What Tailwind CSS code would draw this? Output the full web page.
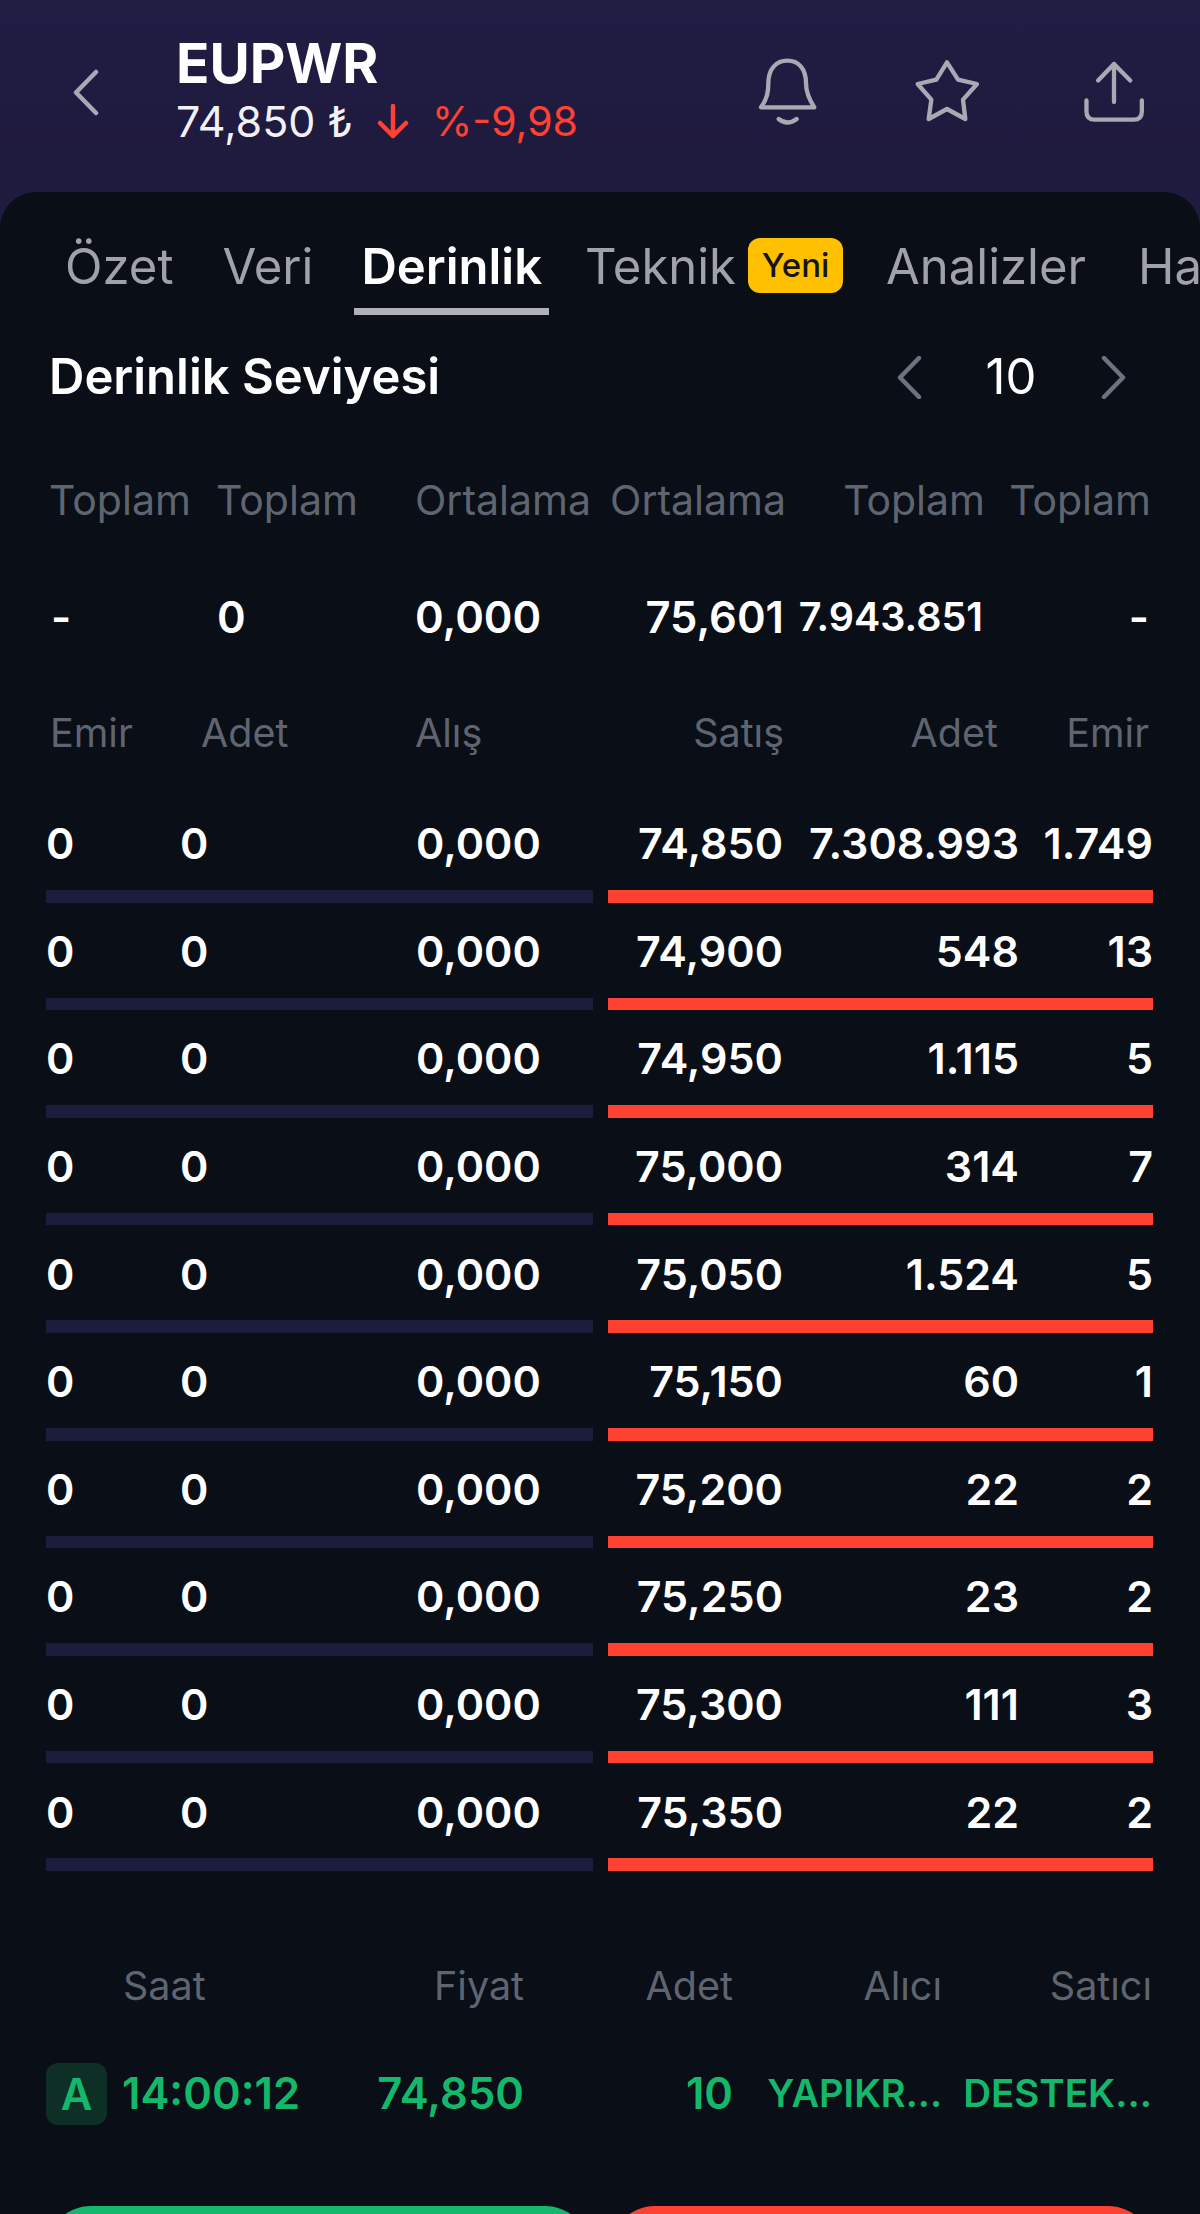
<!DOCTYPE html>
<html lang="tr">
<head>
  <meta charset="UTF-8">
  <meta name="viewport" content="width=device-width, initial-scale=1.0">
  <title>EUPWR Derinlik</title>
  <script src="https://cdn.jsdelivr.net/npm/@tailwindcss/browser@4"></script>
</head>
<body class="bg-[#1f1b3f] font-[Inter,sans-serif] text-white">
  <div class="w-[1200px] h-[2214px] overflow-hidden">
    <!-- header -->
    <header class="h-[192px] flex items-start pr-[54px] bg-gradient-to-b from-[#211c43] to-[#1e1a3d]">
      <svg class="ml-[72px] mt-[69px] w-[28px] h-[47px] shrink-0" viewBox="0 0 28 47" fill="none" stroke="#a9a9b4" stroke-width="4.5" stroke-linecap="round" stroke-linejoin="round"><path d="M24 3 L4 23.500 L24 44"/></svg>
      <div class="ml-[76px] pt-[30px]">
        <div class="text-[55px] leading-[66px] font-bold">EUPWR</div>
        <div class="flex items-center text-[43px] leading-[50px] text-[#f1f1f4]">
          <span>74,850 ₺</span>
          <svg class="ml-[24px] w-[32px] h-[36px]" viewBox="0 0 32 36" fill="none" stroke="#ff4131" stroke-width="4.500" stroke-linecap="round" stroke-linejoin="round"><path d="M16 3 V33 M3 20 L16 33 L29 20"/></svg>
          <span class="ml-[23px] text-[41px] text-[#ff4131]">%-9,98</span>
        </div>
      </div>
      <div class="ml-auto flex items-start">
        <svg class="mt-[56px] w-[63px] h-[71px]" viewBox="228 108 189 213" fill="none" stroke="#a9a9b4" stroke-width="13" stroke-linecap="round" stroke-linejoin="round"><path d="M243 262 H403 C385 235 378 215 378 190 C378 145 355 122 322 122 C290 122 265 145 265 190 C265 215 262 235 243 262 Z"/><path d="M296 297 Q322 318 350 297"/></svg>
        <svg class="ml-[94px] mt-[58px] w-[69px] h-[65px]" viewBox="700 115 207 195" fill="none" stroke="#a9a9b4" stroke-width="13" stroke-linecap="round" stroke-linejoin="round"><path d="M802 128 L835 180 L892 193 L850 240 L857 298 L802 268 L747 298 L755 240 L714 193 L770 180 Z"/></svg>
        <svg class="ml-[100px] mt-[60px] w-[64px] h-[63px]" viewBox="1205 120 192 190" fill="none" stroke="#a9a9b4" stroke-width="13" stroke-linecap="round" stroke-linejoin="round"><path d="M1301 247 V132 M1253 182 L1301 132 L1350 182"/><path d="M1218 242 V275 Q1218 300 1243 300 H1360 Q1385 300 1385 275 V242"/></svg>
      </div>
    </header>

    <main class="bg-[#0a0e17] rounded-t-[36px] h-[2022px] overflow-hidden">
      <!-- tabs -->
      <nav class="h-[123px] pt-[39px] pl-[65px] flex items-start whitespace-nowrap text-[49px] leading-[72px] text-[#a1a1aa] overflow-hidden">
        <span class="shrink-0">Özet</span>
        <span class="shrink-0 ml-[49px]">Veri</span>
        <span class="shrink-0 ml-[41px] h-[84px] px-[7px] border-b-[7px] border-[#b0b0b8] font-semibold text-white">Derinlik</span>
        <span class="shrink-0 ml-[36px]">Teknik</span>
        <span class="shrink-0 ml-[12px] mt-[7px] w-[95px] h-[55px] rounded-[12px] bg-[#ffc000] text-[#14141a] text-[33px] leading-[55px] text-center font-medium">Yeni</span>
        <span class="shrink-0 ml-[43px]">Analizler</span>
        <span class="shrink-0 ml-[52px]">Haberler</span>
      </nav>

      <!-- level selector -->
      <div class="h-[122px] pt-[2px] pl-[49px] pr-[74px] flex items-center justify-between">
        <span class="text-[49px] font-semibold">Derinlik Seviyesi</span>
        <div class="flex items-center">
          <svg class="w-[25px] h-[43px]" viewBox="0 0 25 43" fill="none" stroke="#6b7280" stroke-width="4.500" stroke-linecap="round" stroke-linejoin="round"><path d="M22 2 L3 21.500 L22 41"/></svg>
          <span class="ml-[62px] w-[54px] text-[49px] text-center">10</span>
          <svg class="ml-[63px] w-[25px] h-[43px]" viewBox="0 0 25 43" fill="none" stroke="#6b7280" stroke-width="4.500" stroke-linecap="round" stroke-linejoin="round"><path d="M3 2 L22 21.500 L3 41"/></svg>
        </div>
      </div>

      <!-- summary -->
      <div class="h-[128px] pl-[49px] grid grid-cols-[167px_199px_180px_191px_199px_166px] items-center text-[41px] text-[#5f6570]">
        <span>Toplam</span><span>Toplam</span><span>Ortalama</span>
        <span class="text-right">Ortalama</span><span class="text-right">Toplam</span><span class="text-right">Toplam</span>
      </div>
      <div class="h-[106px] px-[51px] grid grid-cols-[166px_198px_180px_189px_199px_166px] items-center text-[43.5px] font-semibold">
        <span>-</span><span>0</span><span>0,000</span>
        <span class="text-right">75,601</span><span class="text-right text-[39.5px]">7.943.851</span><span class="text-right">-</span>
      </div>

      <!-- depth table -->
      <div class="h-[124px] pt-[2px] px-[50px] grid grid-cols-[151px_214px_190px_179px_214px_151px] items-center text-[39.5px] text-[#5f6570]">
        <span>Emir</span><span>Adet</span><span>Alış</span>
        <span class="text-right">Satış</span><span class="text-right">Adet</span><span class="text-right">Emir</span>
      </div>
      <div id="rows"></div>

      <!-- last trades -->
      <div class="h-[145px] px-[46px] grid grid-cols-[76px_208px_194px_209px_209px_210px] items-end text-[39.5px] leading-[60px] text-[#5f6570]">
        <span class="col-start-2 pl-[1px]">Saat</span>
        <span class="text-right">Fiyat</span><span class="text-right">Adet</span><span class="text-right">Alıcı</span><span class="text-right">Satıcı</span>
      </div>
      <div class="h-[156px] px-[46px] grid grid-cols-[76px_208px_194px_209px_209px_210px] items-center text-[43.5px] font-semibold text-[#14b86a] whitespace-nowrap">
        <span class="w-[61px] h-[62px] rounded-[12px] bg-[#0d2f26] text-center leading-[62px]">A</span>
        <span>14:00:12</span>
        <span class="text-right">74,850</span>
        <span class="text-right">10</span>
        <span class="text-right text-[38px]">YAPIKR...</span>
        <span class="text-right text-[38.5px]">DESTEK...</span>
      </div>

      <!-- buy / sell -->
      <div class="mt-[34px] pl-[46px] flex gap-[20px]">
        <div class="w-[544px] h-[90px] rounded-[45px] bg-[#14b86a]"></div>
        <div class="w-[543px] h-[90px] rounded-[45px] bg-[#ff4131]"></div>
      </div>
    </main>
  </div>

  <script>
    const rows = [
      ['74,850', '7.308.993', '1.749'],
      ['74,900', '548', '13'],
      ['74,950', '1.115', '5'],
      ['75,000', '314', '7'],
      ['75,050', '1.524', '5'],
      ['75,150', '60', '1'],
      ['75,200', '22', '2'],
      ['75,250', '23', '2'],
      ['75,300', '111', '3'],
      ['75,350', '22', '2'],
    ];
    document.getElementById('rows').innerHTML = rows.map(r => `
      <div class="h-[107.6px] px-[46px]">
        <div class="h-[95px] pt-[2px] grid grid-cols-[134px_236px_192px_175px_236px_134px] items-center text-[43px] font-semibold">
          <span>0</span><span>0</span><span>0,000</span>
          <span class="text-right">${r[0]}</span><span class="text-right">${r[1]}</span><span class="text-right">${r[2]}</span>
        </div>
        <div class="flex gap-[15px]">
          <div class="w-[547px] h-[12.6px] bg-[#1c1c3d]"></div>
          <div class="w-[545px] h-[12.6px] bg-[#ff4131]"></div>
        </div>
      </div>`).join('');
  </script>
</body>
</html>
